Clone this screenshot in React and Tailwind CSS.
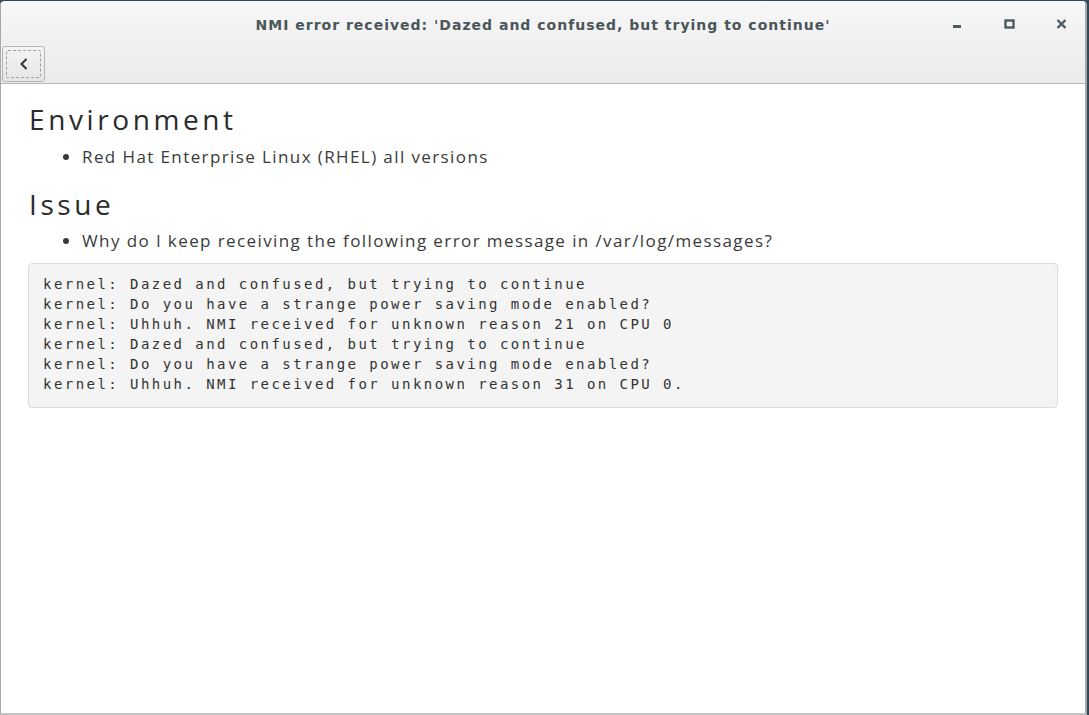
import React from 'react';

const codeLines = [
  'kernel: Dazed and confused, but trying to continue',
  'kernel: Do you have a strange power saving mode enabled?',
  'kernel: Uhhuh. NMI received for unknown reason 21 on CPU 0',
  'kernel: Dazed and confused, but trying to continue',
  'kernel: Do you have a strange power saving mode enabled?',
  'kernel: Uhhuh. NMI received for unknown reason 31 on CPU 0.',
];

function WindowControls() {
  return (
    <div className="flex items-start gap-[41px] text-[#4d5a5e]">
      <svg width="11" height="10" viewBox="0 0 11 10">
        <rect x="1" y="6" width="8" height="3" fill="currentColor" />
      </svg>
      <svg width="11" height="10" viewBox="0 0 11 10">
        <rect x="1.5" y="1.5" width="8" height="7" fill="none" stroke="currentColor" strokeWidth="2.4" />
      </svg>
      <svg width="11" height="10" viewBox="0 0 11 10">
        <path d="M1.5 1 L9.5 9 M9.5 1 L1.5 9" stroke="currentColor" strokeWidth="2.4" />
      </svg>
    </div>
  );
}

export default function App() {
  const sans = { fontFamily: '"Open Sans", "DejaVu Sans", sans-serif' };

  return (
    <div className="w-[1089px] h-[715px] bg-[#2f4a55] overflow-hidden">
      <div className="h-full flex flex-col bg-white border-t border-[#2f4a55] rounded-t-[5px] overflow-hidden mr-[2px] mb-[2px] border-l border-l-[#a8a8a8] border-r-2 border-r-[#a8a8a8] border-b-2 border-b-[#c4c4c4]">
        {/* header bar */}
        <div className="h-[83px] shrink-0 flex flex-col bg-gradient-to-b from-[#f7f7f7] to-[#ebebeb] border-b border-[#b6b6b3] relative">
          <div className="h-[45px] pt-[3px] flex items-center">
            <div
              className="flex-1 text-center text-[14px] font-bold text-[#4b565a] tracking-[1px]"
              style={{ fontFamily: '"DejaVu Sans", sans-serif' }}
            >
              NMI error received: 'Dazed and confused, but trying to continue'
            </div>
          </div>
          <div className="absolute right-[18px] top-[18px]">
            <WindowControls />
          </div>
          <div className="pl-[1px]">
            <button className="w-[43px] h-[36px] rounded-[3px] border border-[#b6b6b3] bg-gradient-to-b from-[#f4f4f4] to-[#e6e6e6] flex items-center justify-center p-[3px]">
              <span className="w-full h-full border border-dashed border-[#a0a0a0] rounded-[2px] flex items-center justify-center">
                <svg width="12" height="14" viewBox="0 0 12 14">
                  <path d="M8.5 2 L3.5 7 L8.5 12" fill="none" stroke="#2e3436" strokeWidth="2" />
                </svg>
              </span>
            </button>
          </div>
        </div>

        {/* content */}
        <div className="flex-1 pl-[27px] pr-[27px] pt-[17px] text-[#333]" style={sans}>
          <h1 className="pl-[1px] text-[28px] leading-[36px] text-[#2b2b2b] tracking-[3.6px]">Environment</h1>
          <ul className="list-disc pl-[54px] mt-[7px] text-[17px] leading-[26px] text-[#3a3a3a] tracking-[1.4px]">
            <li>Red Hat Enterprise Linux (RHEL) all versions</li>
          </ul>
          <h1 className="pl-[1px] text-[28px] leading-[36px] text-[#2b2b2b] mt-[16px] tracking-[3.6px]">Issue</h1>
          <ul className="list-disc pl-[54px] mt-[6px] text-[17px] leading-[26px] text-[#3a3a3a] tracking-[1.4px]">
            <li>Why do I keep receiving the following error message in /var/log/messages?</li>
          </ul>
          <pre
            className="mt-[9px] bg-[#f4f4f4] border border-[#dcdcdc] rounded-[4px] px-[14px] pt-[10px] pb-[13px] text-[14px] leading-[20px] text-[#333] tracking-[2.45px]"
            style={{ fontFamily: '"DejaVu Sans Mono", monospace' }}
          >
            {codeLines.join('\n')}
          </pre>
        </div>
      </div>
    </div>
  );
}
